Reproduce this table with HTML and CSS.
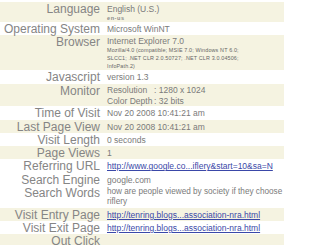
FILE: index.html
```html
<!DOCTYPE html>
<html>
<head>
<meta charset="utf-8">
<link rel="stylesheet" href="styles.css">
</head>
<body>
<div class="stats">
  <div class="row shade lang">
    <div class="label">Language</div>
    <div class="value"><div class="l1">English (U.S.)</div><div class="tiny">en-us</div></div>
  </div>
  <div class="row">
    <div class="label">Operating System</div>
    <div class="value">Microsoft WinNT</div>
  </div>
  <div class="row shade browser">
    <div class="label">Browser</div>
    <div class="value"><div class="l1">Internet Explorer 7.0</div><div class="small">Mozilla/4.0 (compatible; MSIE 7.0; Windows NT 6.0;<br>SLCC1; .NET CLR 2.0.50727; .NET CLR 3.0.04506;<br>InfoPath.2)</div></div>
  </div>
  <div class="row js">
    <div class="label">Javascript</div>
    <div class="value">version 1.3</div>
  </div>
  <div class="row shade two">
    <div class="label">Monitor</div>
    <div class="value"><div><span class="key">Resolution</span>: 1280 x 1024</div><div><span class="key">Color Depth</span>: 32 bits</div></div>
  </div>
  <div class="row">
    <div class="label">Time of Visit</div>
    <div class="value">Nov 20 2008 10:41:21 am</div>
  </div>
  <div class="row shade">
    <div class="label">Last Page View</div>
    <div class="value">Nov 20 2008 10:41:21 am</div>
  </div>
  <div class="row">
    <div class="label">Visit Length</div>
    <div class="value">0 seconds</div>
  </div>
  <div class="row shade">
    <div class="label">Page Views</div>
    <div class="value">1</div>
  </div>
  <div class="row">
    <div class="label">Referring URL</div>
    <div class="value"><a href="#">http://www.google.co...iflery&amp;start=10&amp;sa=N</a></div>
  </div>
  <div class="row">
    <div class="label">Search Engine</div>
    <div class="value">google.com</div>
  </div>
  <div class="row two words">
    <div class="label">Search Words</div>
    <div class="value">how are people viewed by society if they choose<br>riflery</div>
  </div>
  <div class="row shade">
    <div class="label">Visit Entry Page</div>
    <div class="value"><a href="#">http://tenring.blogs...association-nra.html</a></div>
  </div>
  <div class="row">
    <div class="label">Visit Exit Page</div>
    <div class="value"><a href="#">http://tenring.blogs...association-nra.html</a></div>
  </div>
  <div class="row shade">
    <div class="label">Out Click</div>
    <div class="value"></div>
  </div>
</div>
</body>
</html>
```

FILE: styles.css
```css
html, body {
  margin: 0;
  padding: 0;
  background: #ffffff;
}

.stats {
  width: 284px;
  margin-top: 2px;
  font-family: "Liberation Sans", Arial, sans-serif;
  color: #6a6a6a;
}

.row {
  display: grid;
  grid-template-columns: 104px 1fr;
  align-items: start;
}

.row.shade {
  background: #f5f3e1;
}

.label {
  text-align: right;
  padding: 1px 4px 0 0;
  font-size: 12px;
  line-height: 12.25px;
  color: #858585;
  white-space: nowrap;
}

.value {
  padding-left: 3px;
  padding-top: 1px;
  font-size: 8.5px;
  line-height: 12.25px;
  color: #7a7a7a;
  white-space: nowrap;
}

.value a {
  color: #3a48a8;
  text-decoration: underline;
}

.lang .l1 {
  line-height: 12px;
}

.tiny {
  font-size: 5.5px;
  line-height: 7px;
  letter-spacing: 0.6px;
  font-weight: bold;
  color: #8a8a8a;
}

.browser .l1 {
  line-height: 10px;
}

.small {
  font-size: 5.4px;
  line-height: 8px;
  letter-spacing: 0.15px;
  color: #666666;
}

.js .label,
.js .value {
  line-height: 13px;
}

.two .value {
  line-height: 10.5px;
}

.key {
  display: inline-block;
  width: 47px;
}

.words .value {
  font-size: 8.2px;
}
```
